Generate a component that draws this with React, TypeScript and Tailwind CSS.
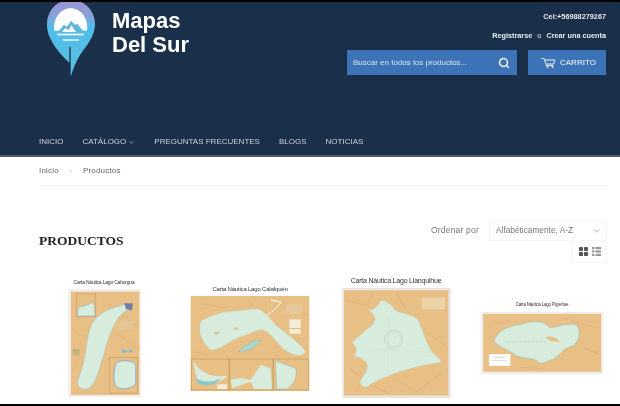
import React from "react";
import { Search, ChevronDown, ChevronRight } from "lucide-react";

const TAN = "#e8bf85";
const LAKE = "#d8ecdd";
const LINE = "#d2a469";

function Logo() {
  return (
    <svg viewBox="27 6 180 234" width="60" height="78" className="shrink-0">
      <defs>
        <linearGradient id="pin" x1="0" y1="0" x2="0" y2="1">
          <stop offset="0" stopColor="#9a93cf" />
          <stop offset="0.2" stopColor="#8aa0d8" />
          <stop offset="0.36" stopColor="#4fbdec" />
          <stop offset="1" stopColor="#5cc0dc" />
        </linearGradient>
      </defs>
      <path d="M122 0 C 165 0 195 32 195 72 C 195 110 170 135 150 165 C 138 185 128 210 122 230 L 122 140 L 118 140 L 118 188 C 100 172 75 145 62 118 C 54 102 51 88 51 72 C 51 32 80 0 122 0 Z" fill="url(#pin)" />
      <path d="M73 92 C 68 55 92 25 122 25 C 152 25 176 55 171 92 Z" fill="#ffffff" />
      <path d="M84 96 L 102 74 L 110 80 L 124 62 L 134 74 L 142 72 L 162 96 Z" fill="#5fb7d9" />
      <path d="M96 96 L 106 84 L 116 90 L 124 76 L 138 96 Z" fill="#ffffff" />
      <rect x="82" y="101" width="80" height="5" fill="#ffffff" />
      <rect x="98" y="118" width="48" height="4" fill="#ffffff" />
    </svg>
  );
}

function CartIcon() {
  return (
    <svg viewBox="0 0 30 20" width="15" height="10" fill="none" stroke="#ffffff" strokeWidth="1.8">
      <path d="M1 1 H6 L11 15 H25" />
      <path d="M8 4 H28 L25 12 H11" />
      <circle cx="13" cy="18" r="1.4" />
      <circle cx="23" cy="18" r="1.4" />
    </svg>
  );
}

function Map1() {
  return (
    <svg viewBox="82 57 218 325" width="73" height="108" className="block">
      <rect x="82" y="57" width="218" height="325" fill="#f1efec" />
      <rect x="90" y="65" width="206" height="311" fill={TAN} />
      <path d="M90 180 L 150 210 M 200 100 L 290 170 M 230 190 L 296 240 M 95 300 L 120 260" stroke={LINE} strokeWidth="1" fill="none" />
      <rect x="107" y="72" width="58" height="69" fill={TAN} stroke="#a67f48" strokeWidth="1" />
      <path d="M110 138 L 112 112 C 125 110 140 105 158 96 L 163 138 Z" fill={LAKE} stroke="#6fb7c4" strokeWidth="1.5" />
      <path d="M258 102 C 235 108 190 118 165 145 C 145 170 140 200 135 240 C 130 280 118 310 110 335 C 110 355 125 362 145 355 C 165 340 175 300 190 250 C 200 210 215 170 235 140 C 250 125 268 118 275 105 Z" fill={LAKE} stroke="#82b8c6" strokeWidth="1" />
      <path d="M250 100 L 276 100 L 274 122 L 256 118 Z" fill="#6f7fa8" />
      <rect x="236" y="154" width="42" height="26" fill="#e4c797" />
      <path d="M240 235 L 262 246 L 248 250 Z M 268 236 L 276 246 L 264 248 Z" fill="#7db6dc" />
      <rect x="95" y="238" width="22" height="18" fill="#c4b27f" />
      <rect x="205" y="263" width="85" height="107" fill={TAN} stroke="#a67f48" strokeWidth="1" />
      <path d="M225 280 C 245 268 275 272 285 285 L 285 345 C 270 355 245 365 225 350 C 215 330 220 300 225 280 Z" fill={LAKE} stroke="#5d9bd6" strokeWidth="2" />
    </svg>
  );
}

function Map2() {
  return (
    <svg viewBox="450 73 356 285" width="120" height="95" className="block">
      <rect x="450" y="73" width="356" height="285" fill={TAN} />
      <path d="M480 95 L 560 110 M 620 80 L 640 110 M 460 240 L 500 250 M 700 100 L 800 130 M 760 215 L 800 190" stroke={LINE} strokeWidth="1" fill="none" />
      <path d="M690 85 L 722 92 L 700 115 L 672 136" stroke="#ffffff" strokeWidth="3" fill="none" />
      <path d="M480 150 C 500 135 540 120 580 118 C 620 118 640 105 660 115 C 680 130 690 140 700 155 C 720 175 770 205 795 240 C 790 250 770 255 750 245 C 720 235 700 190 670 175 C 650 170 625 190 600 195 C 570 205 540 235 510 235 C 490 215 470 190 480 150 Z" fill={LAKE} stroke="#b9cfb8" strokeWidth="1" />
      <path d="M595 240 C 610 220 640 205 660 205 C 650 225 620 240 595 240 Z" fill="#a9d6cf" stroke="#6eb0b0" strokeWidth="1" />
      <rect x="520" y="180" width="16" height="8" fill="#d9c59a" />
      <rect x="580" y="168" width="14" height="6" fill="#d9c59a" />
      <rect x="735" y="98" width="50" height="30" fill="#e6c99a" />
      <rect x="746" y="143" width="34" height="26" fill="#f3ecd9" />
      <rect x="746" y="172" width="34" height="14" fill="#f3ecd9" />
      <rect x="453" y="262" width="112" height="93" fill={TAN} stroke="#b7914f" strokeWidth="1.5" />
      <rect x="567" y="262" width="130" height="93" fill={TAN} stroke="#b7914f" strokeWidth="1.5" />
      <rect x="699" y="262" width="105" height="93" fill={TAN} stroke="#b7914f" strokeWidth="1.5" />
      <path d="M458 270 C 480 300 510 320 560 312 C 545 330 510 345 475 335 C 470 315 460 295 458 270 Z" fill={LAKE} />
      <path d="M462 320 C 485 330 510 335 540 320 C 525 345 490 345 472 335 Z" fill="#8cc5c6" />
      <path d="M570 325 L 600 318 L 630 325 L 660 280 L 690 290 L 694 352 L 640 352 L 630 330 L 600 340 L 575 350 Z" fill={LAKE} />
      <path d="M705 268 L 765 290 C 770 310 765 330 740 352 L 708 352 Z" fill={LAKE} stroke="#8cb8c6" strokeWidth="1.5" />
      <rect x="530" y="338" width="30" height="14" fill="#f3ecd9" />
    </svg>
  );
}

function Map3() {
  return (
    <svg viewBox="37 55 328 333" width="109" height="110" className="block">
      <rect x="37" y="55" width="328" height="333" fill="#e9e6e2" />
      <rect x="42" y="62" width="316" height="318" fill={TAN} />
      <path d="M50 90 L 110 110 L 130 70 M 200 70 L 230 120 M 60 300 L 100 330 L 80 370 M 200 330 L 260 370 L 340 310 M 290 190 L 350 230 M 120 350 L 180 375" stroke={LINE} strokeWidth="1.2" fill="none" />
      <rect x="278" y="84" width="70" height="36" fill="#edd3a8" />
      <path d="M150 95 C 165 90 180 100 195 120 C 215 135 240 130 265 150 C 280 180 290 220 310 250 C 325 265 335 270 335 280 C 310 285 270 290 240 300 C 200 310 160 325 125 345 C 105 365 95 350 90 340 C 100 320 120 300 110 280 C 95 265 80 265 72 260 C 90 240 70 225 65 220 C 90 200 110 180 130 165 C 145 145 130 130 118 125 C 135 115 150 110 150 95 Z" fill={LAKE} stroke="#a9d0c2" strokeWidth="1" />
      <circle cx="192" cy="210" r="28" fill="none" stroke="#a3b8aa" strokeWidth="1" />
      <circle cx="192" cy="210" r="22" fill="none" stroke="#a3b8aa" strokeWidth="0.8" />
      <path d="M178 140 L 176 310 M 120 240 L 320 250" stroke="#c3d6c6" strokeWidth="0.8" fill="none" />
    </svg>
  );
}

function Map4() {
  return (
    <svg viewBox="452 122 368 188" width="122" height="62" className="block">
      <rect x="452" y="122" width="368" height="188" fill="#eeeae4" />
      <rect x="458" y="128" width="357" height="175" fill={TAN} />
      <path d="M470 160 L 530 150 M 700 140 L 800 170 M 760 230 L 810 250 M 570 290 L 640 295" stroke={LINE} strokeWidth="1" fill="none" />
      <path d="M490 210 C 500 180 530 165 570 160 C 600 150 640 145 660 170 C 680 170 700 155 740 160 C 755 180 750 210 730 225 C 700 230 695 250 670 265 C 650 270 640 280 625 275 C 620 260 580 265 560 255 C 530 235 500 225 490 210 Z" fill={LAKE} stroke="#5db5bc" strokeWidth="1" />
      <path d="M648 198 C 665 192 680 200 690 212 C 675 215 655 210 648 198 Z" fill={TAN} />
      <path d="M530 212 H 650" stroke="#7f8f80" strokeWidth="1" strokeDasharray="4 4" />
      <rect x="475" y="250" width="65" height="35" fill="#ffffff" />
      <rect x="490" y="258" width="35" height="2" fill="#bbb" />
      <rect x="485" y="268" width="45" height="2" fill="#ccc" />
    </svg>
  );
}

function Product({ title, size, children }: { title: string; size: string; children: React.ReactNode }) {
  return (
    <div className="flex flex-col items-center">
      <div className={`${size} text-center leading-[10px] tracking-[-0.2px] text-[#333] whitespace-nowrap mb-[2px]`}>{title}</div>
      {children}
    </div>
  );
}

export default function App() {
  return (
    <div className="w-[620px] h-[406px] overflow-hidden bg-white border-y-2 border-black flex flex-col blur-[0.4px] font-['Liberation_Sans',sans-serif]">
      <header className="h-[155px] shrink-0 bg-[#1a2f49] border-b-2 border-[#4a5c78] flex flex-col overflow-hidden">
        <div className="flex-1 flex justify-between pl-[39px] pr-[14px]">
          <div className="flex items-start">
            <Logo />
            <div className="ml-[13px] mt-[7px] text-white font-bold text-[22px] leading-[24px]">
              <div>Mapas</div>
              <div>Del Sur</div>
            </div>
          </div>
          <div className="flex flex-col items-end">
            <div className="mt-[10px] text-[7.3px] leading-[10px] font-bold text-[#e8ebef]">Cel:+56988279267</div>
            <div className="mt-[9px] flex items-center gap-[5px] text-[7.3px] leading-[10px] font-bold text-[#e8ebef]">
              <span>Registrarse</span>
              <span className="font-normal">o</span>
              <span>Crear una cuenta</span>
            </div>
            <div className="mt-[9px] flex gap-[11px]">
              <div className="w-[170px] h-[25px] bg-[#3d74b8] flex items-center justify-between pl-[6px] pr-[7px]">
                <span className="text-[8px] text-[#dbe6f3]">Buscar en todos los productos...</span>
                <Search size={12} strokeWidth={2.8} className="text-white" />
              </div>
              <div className="w-[78px] h-[25px] bg-[#3d74b8] flex items-center pl-[13px] gap-[4px] text-[8px] text-white">
                <CartIcon />
                <span>CARRITO</span>
              </div>
            </div>
          </div>
        </div>
        <nav className="h-[19px] shrink-0 pl-[39px] flex items-start gap-[19px] text-[8px] leading-[12px] text-[#ccd2da]">
          <span>INICIO</span>
          <span className="flex items-center gap-[2px]">
            CATÁLOGO
            <ChevronDown size={7} strokeWidth={2} />
          </span>
          <span>PREGUNTAS FRECUENTES</span>
          <span>BLOGS</span>
          <span>NOTICIAS</span>
        </nav>
      </header>

      <main className="flex-1 pl-[39px] pr-[13px] min-h-0">
        <div className="h-[29px] border-b border-[#f4f4f4] flex items-center pb-[1px] text-[8px] tracking-[0.2px] text-[#666]">
          <span>Inicio</span>
          <ChevronRight size={6} strokeWidth={2} className="ml-[9px] mr-[9px] text-[#999]" />
          <span>Productos</span>
        </div>

        <div className="mt-[34px] flex items-center justify-between">
          <h1 className="font-['Liberation_Serif',serif] font-bold text-[13.5px] text-[#222]">PRODUCTOS</h1>
          <div className="flex flex-col items-end">
            <div className="flex items-center gap-[10px]">
              <span className="text-[8.5px] tracking-[0.2px] text-[#777]">Ordenar por</span>
              <div className="w-[118px] h-[21px] border border-[#f6f6f6] flex items-center justify-between pl-[6px] pr-[4px] text-[8.3px] text-[#777]">
                <span>Alfabéticamente, A-Z</span>
                <ChevronDown size={10} strokeWidth={1.5} className="text-[#888]" />
              </div>
            </div>
            <div className="w-[35px] h-[22px] border border-t-0 border-[#f6f6f6] flex items-center justify-center gap-[4px]">
              <svg viewBox="0 0 9 9" width="9" height="9" fill="#555">
                <rect x="0" y="0" width="4" height="4" rx="0.8" />
                <rect x="5" y="0" width="4" height="4" rx="0.8" />
                <rect x="0" y="5" width="4" height="4" rx="0.8" />
                <rect x="5" y="5" width="4" height="4" rx="0.8" />
              </svg>
              <svg viewBox="0 0 9 9" width="9" height="9" fill="#999">
                <rect x="0" y="0" width="2.5" height="2.2" />
                <rect x="3.5" y="0" width="5.5" height="2.2" />
                <rect x="0" y="3.4" width="2.5" height="2.2" />
                <rect x="3.5" y="3.4" width="5.5" height="2.2" />
                <rect x="0" y="6.8" width="2.5" height="2.2" />
                <rect x="3.5" y="6.8" width="5.5" height="2.2" />
              </svg>
            </div>
          </div>
        </div>

        <div className="ml-[-8px] mt-[13px] grid grid-cols-[repeat(4,146px)] items-center">
          <Product title="Carta Náutica Lago Caburgua" size="text-[5px]">
            <Map1 />
          </Product>
          <Product title="Carta Náutica Lago Calafquén" size="text-[6px]">
            <Map2 />
          </Product>
          <Product title="Carta Náutica Lago Llanquihue" size="text-[7px]">
            <Map3 />
          </Product>
          <Product title="Carta Náutica Lago Puyehue" size="text-[4.5px]">
            <Map4 />
          </Product>
        </div>
      </main>
    </div>
  );
}
